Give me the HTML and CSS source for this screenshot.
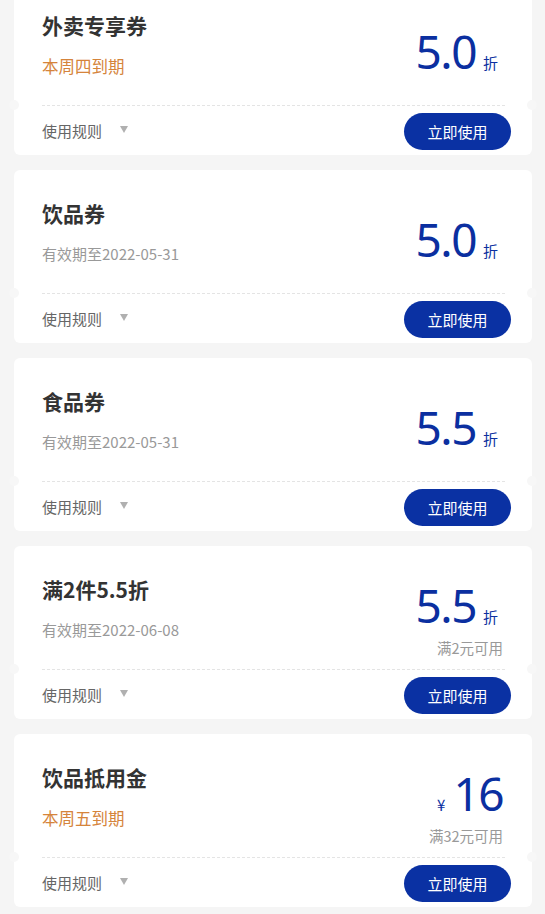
FILE: index.html
```html
<!DOCTYPE html>
<html lang="zh-CN">
<head>
<meta charset="utf-8">
<title>优惠券</title>
<link rel="stylesheet" href="styles.css">
</head>
<body>
<div class="list">
  <div class="card">
    <div class="top">
      <div class="info">
        <div class="title">外卖专享券</div>
        <div class="sub warn">本周四到期</div>
      </div>
      <div class="value">
        <div class="amount"><span class="num">5.0</span><span class="unit">折</span></div>
      </div>
    </div>
    <div class="divider"></div>
    <div class="bottom">
      <div class="rules">使用规则<span class="tri"></span></div>
      <button class="btn">立即使用</button>
    </div>
  </div>

  <div class="card">
    <div class="top">
      <div class="info">
        <div class="title">饮品券</div>
        <div class="sub">有效期至2022-05-31</div>
      </div>
      <div class="value">
        <div class="amount"><span class="num">5.0</span><span class="unit">折</span></div>
      </div>
    </div>
    <div class="divider"></div>
    <div class="bottom">
      <div class="rules">使用规则<span class="tri"></span></div>
      <button class="btn">立即使用</button>
    </div>
  </div>

  <div class="card">
    <div class="top">
      <div class="info">
        <div class="title">食品券</div>
        <div class="sub">有效期至2022-05-31</div>
      </div>
      <div class="value">
        <div class="amount"><span class="num">5.5</span><span class="unit">折</span></div>
      </div>
    </div>
    <div class="divider"></div>
    <div class="bottom">
      <div class="rules">使用规则<span class="tri"></span></div>
      <button class="btn">立即使用</button>
    </div>
  </div>

  <div class="card">
    <div class="top">
      <div class="info">
        <div class="title">满2件5.5折</div>
        <div class="sub">有效期至2022-06-08</div>
      </div>
      <div class="value has-cond">
        <div class="amount"><span class="num">5.5</span><span class="unit">折</span></div>
        <div class="cond">满2元可用</div>
      </div>
    </div>
    <div class="divider"></div>
    <div class="bottom">
      <div class="rules">使用规则<span class="tri"></span></div>
      <button class="btn">立即使用</button>
    </div>
  </div>

  <div class="card">
    <div class="top">
      <div class="info">
        <div class="title">饮品抵用金</div>
        <div class="sub warn">本周五到期</div>
      </div>
      <div class="value has-cond">
        <div class="amount"><span class="yen">¥</span><span class="num">16</span></div>
        <div class="cond">满32元可用</div>
      </div>
    </div>
    <div class="divider"></div>
    <div class="bottom">
      <div class="rules">使用规则<span class="tri"></span></div>
      <button class="btn">立即使用</button>
    </div>
  </div>
</div>
</body>
</html>
```

FILE: styles.css
```css
html, body {
  margin: 0;
  padding: 0;
  background: #f5f5f5;
  font-family: "Noto Sans CJK SC", "Noto Sans", sans-serif;
}

.list {
  display: flex;
  flex-direction: column;
  gap: 15px;
  margin-top: -18px;
  padding: 0 13px 0 14px;
}

.card {
  position: relative;
  background: #fff;
  border-radius: 6px;
  height: 173px;
  box-sizing: border-box;
}

.card::before,
.card::after {
  content: "";
  position: absolute;
  top: 118px;
  width: 10px;
  height: 10px;
  border-radius: 50%;
  background: #f7f7f7;
}
.card::before { left: -5px; }
.card::after { right: -5px; }

.top {
  display: flex;
  justify-content: space-between;
  height: 123px;
  box-sizing: border-box;
  padding: 0 29px 0 28px;
}

.info {
  padding-top: 29px;
}

.title {
  font-size: 21px;
  line-height: 28px;
  font-weight: 700;
  color: #333;
}

.sub {
  margin-top: 16px;
  font-size: 15px;
  line-height: 22px;
  color: #999;
}

.sub.warn {
  font-size: 16.5px;
  color: #d5843b;
}

.value {
  display: flex;
  flex-direction: column;
  align-items: flex-end;
  padding-top: 46px;
}

.value.has-cond {
  padding-top: 36px;
}

.amount {
  display: flex;
  align-items: baseline;
  color: #0b2fa0;
}

.num {
  font-family: "Noto Sans", "Noto Sans CJK SC", sans-serif;
  font-size: 46px;
  line-height: 46px;
  letter-spacing: -1.5px;
}

.unit {
  font-size: 15px;
  margin-left: 7px;
  margin-right: 5px;
}

.yen {
  font-size: 15px;
  margin-right: 8px;
}

.cond {
  margin-top: 10px;
  font-size: 14.5px;
  line-height: 20px;
  color: #999;
}

.divider {
  margin: 0 27px 0 28px;
  border-top: 1px dashed #e4e4e4;
}

.bottom {
  display: flex;
  align-items: center;
  justify-content: space-between;
  height: 49px;
  padding: 0 21px 0 28px;
}

.rules {
  display: flex;
  align-items: center;
  font-size: 15px;
  color: #666;
}

.tri {
  width: 0;
  height: 0;
  margin-left: 18px;
  margin-top: -2px;
  border-left: 4px solid transparent;
  border-right: 4px solid transparent;
  border-top: 7px solid #b0b0b0;
}

.btn {
  width: 107px;
  height: 37px;
  border: none;
  border-radius: 19px;
  background: #0a31a3;
  color: #fff;
  font-family: "Noto Sans CJK SC", sans-serif;
  font-size: 15px;
  padding: 0;
  margin-top: 1px;
}
```
